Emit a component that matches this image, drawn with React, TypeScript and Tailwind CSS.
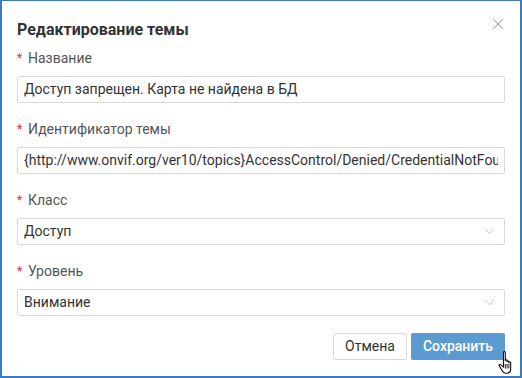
import { X, ChevronDown } from "lucide-react";

const FIELDS: Array<{ label: string; value: string; select?: boolean }> = [
  { label: "Название", value: "Доступ запрещен. Карта не найдена в БД" },
  {
    label: "Идентификатор темы",
    value: "{http://www.onvif.org/ver10/topics}AccessControl/Denied/CredentialNotFound",
  },
  { label: "Класс", value: "Доступ", select: true },
  { label: "Уровень", value: "Внимание", select: true },
];

function HandCursor() {
  return (
    <svg width="18" height="26" viewBox="0 0 18 26" className="absolute left-[496px] top-[349px]">
      <path
        d="M5.5 2.2c0-1 1.8-1 1.8 0v8.3c0-1 1.8-1 1.8 0v1.2c0-1 1.8-1 1.8 0v1c0-1 1.8-1 1.8 0v6.3c0 2.3-1.3 4-3.4 4.2H7.6c-1.4 0-2.300-.7-3-1.8L1.2 15.7c-.6-.9.7-1.900 1.5-1.1l2.8 2.6z"
        fill="#fff"
        stroke="#111"
        strokeWidth="1.1"
        strokeLinejoin="round"
      />
      <path d="M7.3 14v4.5M9.1 14v4.5M10.9 14v4.5" stroke="#111" strokeWidth="0.9" />
    </svg>
  );
}

export default function App() {
  return (
    <div
      className="relative h-[378px] w-[522px] overflow-hidden border-x-2 border-b-2 border-t border-[#3a7dbf] bg-white"
      style={{ fontFamily: "Roboto, 'Noto Sans', sans-serif" }}
    >
      <div className="flex items-start justify-between pl-[15px] pr-[13px] pt-[18px]">
        <h2 className="text-[16px] font-bold leading-[22px] text-[#333]">Редактирование темы</h2>
        <X size={18} strokeWidth={1.4} className="mt-[-4px] text-[#999]" />
      </div>

      <div className="mt-[8px] flex flex-col gap-[17px] pl-[15px] pr-[15px]">
        {FIELDS.map((f) => (
          <div key={f.label} className="flex flex-col gap-[9px]">
            <label className="flex items-center text-[14px] leading-[18px] text-[#555]">
              <span className="mr-[5px] w-[6px] text-[12px] text-[#f5222d]">*</span>
              {f.label}
            </label>
            <div className="flex h-[27px] items-center rounded-[2px] border border-[#d9d9d9] px-[6px]">
              <span className="min-w-0 flex-1 truncate text-clip text-[14px] text-[#333]">{f.value}</span>
              {f.select && <ChevronDown size={17} strokeWidth={1} className="ml-2 text-[#aaa]" />}
            </div>
          </div>
        ))}
      </div>

      <div className="mt-[17px] flex justify-end gap-[4px] pr-[15px]">
        <button className="h-[27px] w-[74px] rounded-[2px] border border-[#d9d9d9] bg-white text-[14px] text-[#333]">
          Отмена
        </button>
        <button className="h-[27px] w-[94px] rounded-[2px] bg-[#5b9bd1] text-[14px] font-medium text-white">
          Сохранить
        </button>
      </div>

      <HandCursor />
    </div>
  );
}
